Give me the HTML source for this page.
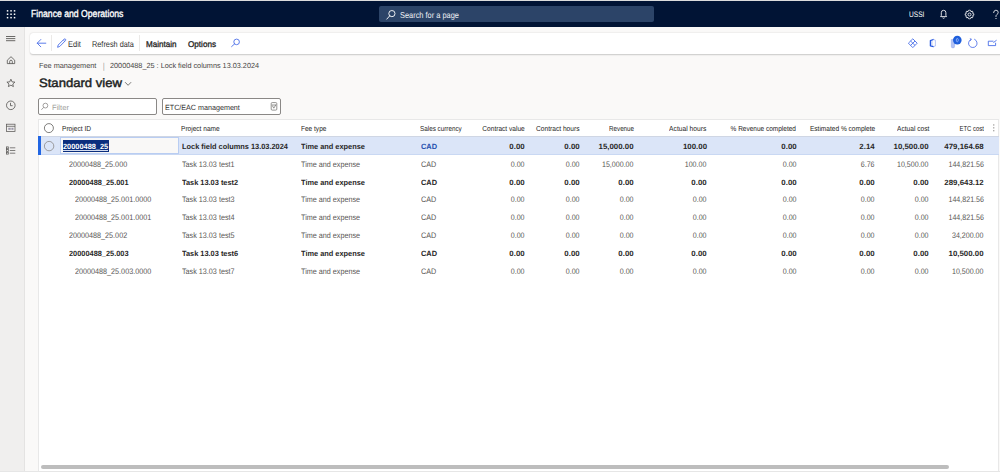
<!DOCTYPE html>
<html><head><meta charset="utf-8">
<style>
*{box-sizing:border-box;margin:0;padding:0}
html,body{width:1000px;height:472px;overflow:hidden;background:#faf9f8;font-family:"Liberation Sans",sans-serif;color:#323130}
.a{position:absolute}
.t{position:absolute;white-space:nowrap;line-height:1;text-rendering:geometricPrecision}
svg{position:absolute;overflow:visible}
</style></head>
<body>
<div class="a" style="left:0;top:0;width:1000px;height:1px;background:#dcdcdc"></div>
<div class="a" style="left:0;top:1px;width:1000px;height:25.5px;background:#011435"></div>
<div class="a" style="left:378.5px;top:6px;width:275.5px;height:16px;background:#2c4468;border-radius:2px"></div>
<div class="a" style="left:0;top:26.5px;width:25px;height:445.5px;background:#f0efee;border-right:1px solid #e4e3e2"></div>
<div class="a" style="left:30px;top:33px;width:975px;height:20.7px;background:#fff;border-radius:3px;box-shadow:0 0.6px 1.6px rgba(0,0,0,0.2)"></div>
<div class="a" style="left:51px;top:35px;width:0.9px;height:16px;background:#ebe9e7"></div>
<div class="a" style="left:139px;top:35px;width:0.9px;height:16px;background:#ebe9e7"></div>
<div class="a" style="left:38px;top:98.2px;width:119px;height:17px;background:#fff;border:1px solid #8a8886;border-radius:2px"></div>
<div class="a" style="left:162px;top:98.2px;width:119px;height:17px;background:#fff;border:1px solid #8a8886;border-radius:2px"></div>
<div class="a" style="left:38px;top:119px;width:961px;height:352px;background:#fff;border:1px solid #e8e8e8;border-bottom:none"></div>
<div class="a" style="left:0;top:471px;width:1000px;height:1px;background:#e6e6e6"></div>
<div class="a" style="left:39px;top:136px;width:959.5px;height:18.6px;background:#dbe5f8;border-top:1px solid #cfd6e4;border-bottom:0.6px solid #c9d8f3"></div>
<div class="a" style="left:38px;top:136.3px;width:2.6px;height:18.4px;background:#2266e3"></div>
<div class="a" style="left:60px;top:136.8px;width:118.8px;height:17.2px;background:#f9f8f7;border:1px solid #b9cdf2"></div>
<div class="a" style="left:62.8px;top:140px;width:46.2px;height:11.8px;background:#0b2e7e"></div>
<div class="a" style="left:63.4px;top:149.6px;width:45px;height:0.9px;background:#d5ddef"></div>
<div class="a" style="left:40.5px;top:465px;width:908.5px;height:3.8px;background:#bdbdbd;border-radius:2px"></div>
<svg width="1000" height="472" viewBox="0 0 1000 472" style="left:0;top:0" fill="none">
 <!-- waffle -->
 <g fill="#fff">
  <rect x="6.8" y="10.1" width="1.5" height="1.5"/><rect x="10.3" y="10.1" width="1.5" height="1.5"/><rect x="13.8" y="10.1" width="1.5" height="1.5"/>
  <rect x="6.8" y="13.5" width="1.5" height="1.5"/><rect x="10.3" y="13.5" width="1.5" height="1.5"/><rect x="13.8" y="13.5" width="1.5" height="1.5"/>
  <rect x="6.8" y="16.9" width="1.5" height="1.5"/><rect x="10.3" y="16.9" width="1.5" height="1.5"/><rect x="13.8" y="16.9" width="1.5" height="1.5"/>
 </g>
 <!-- search in top bar -->
 <g stroke="#ffffff" stroke-width="0.9">
  <circle cx="391.9" cy="13.6" r="3.1"/>
  <path d="M389.7 15.9 L386.8 19.1" stroke-linecap="round"/>
 </g>
 <!-- bell -->
 <g stroke="#ffffff" stroke-width="0.85">
  <path d="M940.6 16.6 L941.3 15.5 L941.3 12.6 Q941.3 10.3 943.6 10.3 Q945.9 10.3 945.9 12.6 L945.9 15.5 L946.6 16.6 Z"/>
  <path d="M942.6 17.8 Q943.6 18.8 944.6 17.8"/>
 </g>
 <!-- gear -->
 <g stroke="#ffffff" stroke-width="0.85">
  <path d="M969.5 10.2 L970.6 10.4 L971.0 11.7 L972.3 11.2 L973.1 12.0 L972.6 13.3 L973.8 13.8 L973.8 15.2 L972.6 15.7 L973.1 17.0 L972.3 17.8 L971.0 17.3 L970.6 18.6 L969.5 18.8 L968.4 18.6 L968.0 17.3 L966.7 17.8 L965.9 17.0 L966.4 15.7 L965.2 15.2 L965.2 13.8 L966.4 13.3 L965.9 12.0 L966.7 11.2 L968.0 11.7 L968.4 10.4 Z"/>
  <circle cx="969.5" cy="14.5" r="1.5"/>
 </g>
 <!-- question -->
 <g stroke="#ffffff" stroke-width="0.8" stroke-linecap="round">
  <path d="M993.6 12.6 Q993.8 10.2 995.9 10.2 Q998.2 10.2 998.2 12.4 Q998.2 13.8 996.9 14.5 Q996 15 996 16.2 L996 16.6"/>
 </g>
 <circle cx="996" cy="18.5" r="0.6" fill="#fff"/>
 <!-- hamburger -->
 <g stroke="#484644" stroke-width="0.8">
  <path d="M6 36.5 H15.3 M6 38.6 H15.3 M6 40.7 H15.3"/>
 </g>
 <!-- home -->
 <g stroke="#4a4846" stroke-width="0.75" stroke-linejoin="round">
  <path d="M7.3 60.2 L11 56.7 L14.7 60.2 L14.7 63.6 L7.3 63.6 Z"/>
  <path d="M9.7 63.6 L9.7 61.4 Q9.7 60.2 11 60.2 Q12.3 60.2 12.3 61.4 L12.3 63.6"/>
 </g>
 <!-- star -->
 <g stroke="#4a4846" stroke-width="0.75" stroke-linejoin="round">
  <path d="M10.9 79.2 L12.1 81.9 L14.9 82.1 L12.8 84.0 L13.4 86.6 L10.9 85.2 L8.4 86.6 L9.0 84.0 L6.9 82.1 L9.7 81.9 Z"/>
 </g>
 <!-- clock -->
 <g stroke="#4a4846" stroke-width="0.75">
  <circle cx="10.8" cy="105.3" r="4.3"/>
  <path d="M10.5 102.8 V105.7 H12.6"/>
 </g>
 <!-- workspace -->
 <g stroke="#5a5856" stroke-width="0.75">
  <rect x="6.5" y="124.2" width="8.5" height="7.2"/>
  <path d="M6.5 126.3 H15"/>
  <rect x="8.3" y="127.8" width="2.4" height="2" fill="#9b97a8" stroke="none"/>
  <rect x="11.4" y="127.8" width="2.1" height="2" fill="#9b97a8" stroke="none"/>
 </g>
 <!-- list -->
 <g stroke="#5a5856" stroke-width="0.75">
  <rect x="6.5" y="146.9" width="1.8" height="1.8"/>
  <rect x="6.5" y="149.6" width="1.8" height="1.8"/>
  <rect x="6.5" y="152.3" width="1.8" height="1.8"/>
  <path d="M9.8 147.8 H15.3 M9.8 150.5 H15.3 M9.8 153.2 H15.3"/>
 </g>
 <!-- back arrow -->
 <g stroke="#4b6ee8" stroke-width="0.9" stroke-linecap="round" stroke-linejoin="round">
  <path d="M45.8 43.2 H37.3 M40.8 39.5 L37.2 43.2 L40.8 46.8"/>
 </g>
 <!-- pencil -->
 <g stroke="#4b6ee8" stroke-width="0.9" stroke-linejoin="round">
  <path d="M57.6 47.3 L58.2 45.0 L64.0 39.2 Q64.9 38.6 65.5 39.2 Q66.1 39.9 65.5 40.6 L59.8 46.4 Z"/>
  <path d="M63.3 40.0 L64.8 41.4"/>
 </g>
 <!-- action search -->
 <g stroke="#4b6ee8" stroke-width="0.9">
  <circle cx="236.6" cy="41.9" r="2.8"/>
  <path d="M234.6 43.9 L231.6 46.6" stroke-linecap="round"/>
 </g>
 <!-- diamond -->
 <g stroke="#3d66e6" stroke-width="0.85" stroke-linejoin="round">
  <path d="M912.8 38.8 L917.2 43.2 L912.8 47.6 L908.4 43.2 Z"/>
  <path d="M910.6 41.0 L915.0 45.4 M915.0 41.0 L910.6 45.4"/>
 </g>
 <!-- office -->
 <g stroke-linejoin="round" stroke-linecap="round">
  <path d="M933.4 39.5 L930.4 40.7 L930.4 45.8 L933.4 46.6" stroke="#2458e0" stroke-width="1.3"/>
  <path d="M933.4 39.5 L935.4 40.2 L935.4 46.0 L933.4 46.6" stroke="#9aaef0" stroke-width="0.7"/>
  <path d="M931.9 41 V45.4" stroke="#7f98ea" stroke-width="0.6"/>
 </g>
 <!-- attach -->
 <path d="M951.3 39.6 H954.6 V46.4 Q954.6 47.9 952.95 47.9 Q951.3 47.9 951.3 46.4 Z" fill="#b3c2f2" stroke="#8ea5ee" stroke-width="0.5"/>
 <circle cx="957.3" cy="40.1" r="4.3" fill="#1f5fdc"/>
 <path d="M957.3 38.4 Q956.3 38.4 956.3 40.1 Q956.3 41.8 957.3 41.8 Q958.3 41.8 958.3 40.1 Q958.3 38.4 957.3 38.4 Z" stroke="#cfdcff" stroke-width="0.55"/>
 <!-- refresh -->
 <g stroke="#4b6ee8" stroke-width="0.85" stroke-linecap="round">
  <path d="M974.6 39.3 A4.3 4.3 0 1 1 971.0 39.3"/>
  <path d="M970.4 38.6 L971.3 39.6 L970.2 40.6" stroke-width="0.9"/>
 </g>
 <!-- open in new -->
 <g stroke="#3d66e6" stroke-width="0.85">
  <path d="M993.5 41.2 H988.3 V45.6 H995.6 V42.8"/>
  <path d="M993.4 42.6 L996.6 40.2"/>
 </g>
 <!-- chevron -->
 <path d="M125.1 82.2 L128.1 85.3 L131.1 82.2" stroke="#605e5c" stroke-width="0.85"/>
 <!-- filter search -->
 <g stroke="#8a8886" stroke-width="0.8">
  <circle cx="45.4" cy="105.6" r="2.4"/>
  <path d="M43.7 107.3 L41.4 109.8"/>
 </g>
 <!-- ETC icon -->
 <g stroke="#7a7876" stroke-width="0.8">
  <rect x="271.2" y="102.6" width="5.6" height="7.5" rx="1"/>
  <path d="M272.3 105.6 L273.8 108.2 L276.0 104.6 M271.8 105 H276"/>
 </g>
 <!-- header radio -->
 <circle cx="48.9" cy="128.1" r="4.5" stroke="#605e5c" stroke-width="0.8"/>
 <!-- selected row radio -->
 <circle cx="49.1" cy="146.1" r="4.7" stroke="#8a8886" stroke-width="0.8"/>
 <!-- header more -->
 <g fill="#9a9896">
  <rect x="993" y="124.4" width="1.4" height="1.1"/><rect x="993" y="127.3" width="1.4" height="1.1"/><rect x="993" y="130.2" width="1.4" height="1.1"/>
 </g>
</svg>

<div class="t" style="left:30.59px;top:10.00px;font-size:10.14px;color:#ffffff;font-weight:normal;-webkit-text-stroke:0.35px #ffffff;transform:scaleX(0.855);transform-origin:left;">Finance and Operations</div>
<div class="t" style="left:399.66px;top:11.00px;font-size:8.55px;color:#eef0f4;font-weight:normal;transform:scaleX(0.867);transform-origin:left;">Search for a page</div>
<div class="t" style="left:908.68px;top:11.00px;font-size:7.97px;color:#ffffff;font-weight:normal;transform:scaleX(0.828);transform-origin:left;">USSI</div>
<div class="t" style="left:67.66px;top:40.00px;font-size:8.41px;color:#323130;font-weight:normal;transform:scaleX(0.894);transform-origin:left;">Edit</div>
<div class="t" style="left:92.16px;top:40.00px;font-size:8.41px;color:#323130;font-weight:normal;transform:scaleX(0.871);transform-origin:left;">Refresh data</div>
<div class="t" style="left:146.06px;top:40.00px;font-size:8.41px;color:#252423;font-weight:normal;-webkit-text-stroke:0.3px #252423;transform:scaleX(0.959);transform-origin:left;">Maintain</div>
<div class="t" style="left:187.66px;top:40.00px;font-size:8.41px;color:#252423;font-weight:normal;-webkit-text-stroke:0.3px #252423;transform:scaleX(0.966);transform-origin:left;">Options</div>
<div class="t" style="left:38.70px;top:62.00px;font-size:7.39px;color:#484644;font-weight:normal;transform:scaleX(0.992);transform-origin:left;">Fee management</div>
<div class="t" style="left:103.15px;top:62.00px;font-size:8.70px;color:#8a8886;font-weight:normal;transform:scaleX(0.690);transform-origin:left;">|</div>
<div class="t" style="left:109.70px;top:62.00px;font-size:7.39px;color:#484644;font-weight:normal;transform:scaleX(0.988);transform-origin:left;">20000488_25 : Lock field columns 13.03.2024</div>
<div class="t" style="left:39.01px;top:77.00px;font-size:12.17px;color:#201f1e;font-weight:normal;-webkit-text-stroke:0.45px #201f1e;transform:scaleX(1.077);transform-origin:left;">Standard view</div>
<div class="t" style="left:51.70px;top:104.00px;font-size:7.54px;color:#a19f9d;font-weight:normal;transform:scaleX(1.012);transform-origin:left;">Filter</div>
<div class="t" style="left:165.20px;top:104.00px;font-size:7.54px;color:#323130;font-weight:normal;transform:scaleX(0.951);transform-origin:left;">ETC/EAC management</div>
<div class="t" style="left:62.01px;top:125.00px;font-size:7.25px;color:#252423;font-weight:normal;transform:scaleX(0.911);transform-origin:left;">Project ID</div>
<div class="t" style="left:181.41px;top:125.00px;font-size:7.25px;color:#252423;font-weight:normal;transform:scaleX(0.906);transform-origin:left;">Project name</div>
<div class="t" style="left:300.71px;top:125.00px;font-size:7.25px;color:#252423;font-weight:normal;transform:scaleX(0.900);transform-origin:left;">Fee type</div>
<div class="t" style="left:420.31px;top:125.00px;font-size:7.25px;color:#252423;font-weight:normal;transform:scaleX(0.871);transform-origin:left;">Sales currency</div>
<div class="t" style="right:475.31px;top:125.00px;font-size:7.25px;color:#252423;font-weight:normal;transform:scaleX(0.907);transform-origin:right;">Contract value</div>
<div class="t" style="right:420.51px;top:125.00px;font-size:7.25px;color:#252423;font-weight:normal;transform:scaleX(0.917);transform-origin:right;">Contract hours</div>
<div class="t" style="right:366.11px;top:125.00px;font-size:7.25px;color:#252423;font-weight:normal;transform:scaleX(0.861);transform-origin:right;">Revenue</div>
<div class="t" style="right:293.31px;top:125.00px;font-size:7.25px;color:#252423;font-weight:normal;transform:scaleX(0.923);transform-origin:right;">Actual hours</div>
<div class="t" style="right:203.71px;top:125.00px;font-size:7.25px;color:#252423;font-weight:normal;transform:scaleX(0.896);transform-origin:right;">% Revenue completed</div>
<div class="t" style="right:125.31px;top:125.00px;font-size:7.25px;color:#252423;font-weight:normal;transform:scaleX(0.904);transform-origin:right;">Estimated % complete</div>
<div class="t" style="right:70.71px;top:125.00px;font-size:7.25px;color:#252423;font-weight:normal;transform:scaleX(0.914);transform-origin:right;">Actual cost</div>
<div class="t" style="right:16.31px;top:125.00px;font-size:7.25px;color:#252423;font-weight:normal;transform:scaleX(0.817);transform-origin:right;">ETC cost</div>
<div class="t" style="left:63.20px;top:143.00px;font-size:7.54px;color:#ffffff;font-weight:bold;transform:scaleX(0.981);transform-origin:left;">20000488_25</div>
<div class="t" style="left:182.20px;top:143.00px;font-size:7.54px;color:#292827;font-weight:bold;transform:scaleX(0.981);transform-origin:left;">Lock field columns 13.03.2024</div>
<div class="t" style="left:301.20px;top:143.00px;font-size:7.54px;color:#292827;font-weight:bold;transform:scaleX(0.981);transform-origin:left;">Time and expense</div>
<div class="t" style="left:420.70px;top:143.00px;font-size:7.54px;color:#1f4fae;font-weight:bold;transform:scaleX(0.981);transform-origin:left;">CAD</div>
<div class="t" style="right:475.30px;top:143.00px;font-size:7.54px;color:#292827;font-weight:bold;transform:scaleX(1.044);transform-origin:right;">0.00</div>
<div class="t" style="right:420.50px;top:143.00px;font-size:7.54px;color:#292827;font-weight:bold;transform:scaleX(1.044);transform-origin:right;">0.00</div>
<div class="t" style="right:366.10px;top:143.00px;font-size:7.54px;color:#292827;font-weight:bold;transform:scaleX(1.044);transform-origin:right;">15,000.00</div>
<div class="t" style="right:293.30px;top:143.00px;font-size:7.54px;color:#292827;font-weight:bold;transform:scaleX(1.044);transform-origin:right;">100.00</div>
<div class="t" style="right:203.70px;top:143.00px;font-size:7.54px;color:#292827;font-weight:bold;transform:scaleX(1.044);transform-origin:right;">0.00</div>
<div class="t" style="right:125.30px;top:143.00px;font-size:7.54px;color:#292827;font-weight:bold;transform:scaleX(1.044);transform-origin:right;">2.14</div>
<div class="t" style="right:71.10px;top:143.00px;font-size:7.54px;color:#292827;font-weight:bold;transform:scaleX(1.044);transform-origin:right;">10,500.00</div>
<div class="t" style="right:16.30px;top:143.00px;font-size:7.54px;color:#292827;font-weight:bold;transform:scaleX(1.044);transform-origin:right;">479,164.68</div>
<div class="t" style="left:68.68px;top:161.00px;font-size:7.97px;color:#585654;font-weight:normal;transform:scaleX(0.905);transform-origin:left;">20000488_25.000</div>
<div class="t" style="left:182.18px;top:161.00px;font-size:7.97px;color:#585654;font-weight:normal;transform:scaleX(0.905);transform-origin:left;">Task 13.03 test1</div>
<div class="t" style="left:301.18px;top:161.00px;font-size:7.97px;color:#585654;font-weight:normal;transform:scaleX(0.905);transform-origin:left;">Time and expense</div>
<div class="t" style="left:420.68px;top:161.00px;font-size:7.97px;color:#585654;font-weight:normal;transform:scaleX(0.905);transform-origin:left;">CAD</div>
<div class="t" style="right:475.28px;top:161.00px;font-size:7.97px;color:#585654;font-weight:normal;transform:scaleX(0.887);transform-origin:right;">0.00</div>
<div class="t" style="right:420.48px;top:161.00px;font-size:7.97px;color:#585654;font-weight:normal;transform:scaleX(0.887);transform-origin:right;">0.00</div>
<div class="t" style="right:366.08px;top:161.00px;font-size:7.97px;color:#585654;font-weight:normal;transform:scaleX(0.887);transform-origin:right;">15,000.00</div>
<div class="t" style="right:293.28px;top:161.00px;font-size:7.97px;color:#585654;font-weight:normal;transform:scaleX(0.887);transform-origin:right;">100.00</div>
<div class="t" style="right:203.68px;top:161.00px;font-size:7.97px;color:#585654;font-weight:normal;transform:scaleX(0.887);transform-origin:right;">0.00</div>
<div class="t" style="right:125.28px;top:161.00px;font-size:7.97px;color:#585654;font-weight:normal;transform:scaleX(0.887);transform-origin:right;">6.76</div>
<div class="t" style="right:71.08px;top:161.00px;font-size:7.97px;color:#585654;font-weight:normal;transform:scaleX(0.887);transform-origin:right;">10,500.00</div>
<div class="t" style="right:16.28px;top:161.00px;font-size:7.97px;color:#585654;font-weight:normal;transform:scaleX(0.887);transform-origin:right;">144,821.56</div>
<div class="t" style="left:68.70px;top:179.00px;font-size:7.54px;color:#292827;font-weight:bold;transform:scaleX(0.981);transform-origin:left;">20000488_25.001</div>
<div class="t" style="left:182.20px;top:179.00px;font-size:7.54px;color:#292827;font-weight:bold;transform:scaleX(0.981);transform-origin:left;">Task 13.03 test2</div>
<div class="t" style="left:301.20px;top:179.00px;font-size:7.54px;color:#292827;font-weight:bold;transform:scaleX(0.981);transform-origin:left;">Time and expense</div>
<div class="t" style="left:420.70px;top:179.00px;font-size:7.54px;color:#292827;font-weight:bold;transform:scaleX(0.981);transform-origin:left;">CAD</div>
<div class="t" style="right:475.30px;top:179.00px;font-size:7.54px;color:#292827;font-weight:bold;transform:scaleX(1.044);transform-origin:right;">0.00</div>
<div class="t" style="right:420.50px;top:179.00px;font-size:7.54px;color:#292827;font-weight:bold;transform:scaleX(1.044);transform-origin:right;">0.00</div>
<div class="t" style="right:366.10px;top:179.00px;font-size:7.54px;color:#292827;font-weight:bold;transform:scaleX(1.044);transform-origin:right;">0.00</div>
<div class="t" style="right:293.30px;top:179.00px;font-size:7.54px;color:#292827;font-weight:bold;transform:scaleX(1.044);transform-origin:right;">0.00</div>
<div class="t" style="right:203.70px;top:179.00px;font-size:7.54px;color:#292827;font-weight:bold;transform:scaleX(1.044);transform-origin:right;">0.00</div>
<div class="t" style="right:125.30px;top:179.00px;font-size:7.54px;color:#292827;font-weight:bold;transform:scaleX(1.044);transform-origin:right;">0.00</div>
<div class="t" style="right:71.10px;top:179.00px;font-size:7.54px;color:#292827;font-weight:bold;transform:scaleX(1.044);transform-origin:right;">0.00</div>
<div class="t" style="right:16.30px;top:179.00px;font-size:7.54px;color:#292827;font-weight:bold;transform:scaleX(1.044);transform-origin:right;">289,643.12</div>
<div class="t" style="left:74.68px;top:196.00px;font-size:7.97px;color:#585654;font-weight:normal;transform:scaleX(0.905);transform-origin:left;">20000488_25.001.0000</div>
<div class="t" style="left:182.18px;top:196.00px;font-size:7.97px;color:#585654;font-weight:normal;transform:scaleX(0.905);transform-origin:left;">Task 13.03 test3</div>
<div class="t" style="left:301.18px;top:196.00px;font-size:7.97px;color:#585654;font-weight:normal;transform:scaleX(0.905);transform-origin:left;">Time and expense</div>
<div class="t" style="left:420.68px;top:196.00px;font-size:7.97px;color:#585654;font-weight:normal;transform:scaleX(0.905);transform-origin:left;">CAD</div>
<div class="t" style="right:475.28px;top:196.00px;font-size:7.97px;color:#585654;font-weight:normal;transform:scaleX(0.887);transform-origin:right;">0.00</div>
<div class="t" style="right:420.48px;top:196.00px;font-size:7.97px;color:#585654;font-weight:normal;transform:scaleX(0.887);transform-origin:right;">0.00</div>
<div class="t" style="right:366.08px;top:196.00px;font-size:7.97px;color:#585654;font-weight:normal;transform:scaleX(0.887);transform-origin:right;">0.00</div>
<div class="t" style="right:293.28px;top:196.00px;font-size:7.97px;color:#585654;font-weight:normal;transform:scaleX(0.887);transform-origin:right;">0.00</div>
<div class="t" style="right:203.68px;top:196.00px;font-size:7.97px;color:#585654;font-weight:normal;transform:scaleX(0.887);transform-origin:right;">0.00</div>
<div class="t" style="right:125.28px;top:196.00px;font-size:7.97px;color:#585654;font-weight:normal;transform:scaleX(0.887);transform-origin:right;">0.00</div>
<div class="t" style="right:71.08px;top:196.00px;font-size:7.97px;color:#585654;font-weight:normal;transform:scaleX(0.887);transform-origin:right;">0.00</div>
<div class="t" style="right:16.28px;top:196.00px;font-size:7.97px;color:#585654;font-weight:normal;transform:scaleX(0.887);transform-origin:right;">144,821.56</div>
<div class="t" style="left:74.68px;top:214.00px;font-size:7.97px;color:#585654;font-weight:normal;transform:scaleX(0.905);transform-origin:left;">20000488_25.001.0001</div>
<div class="t" style="left:182.18px;top:214.00px;font-size:7.97px;color:#585654;font-weight:normal;transform:scaleX(0.905);transform-origin:left;">Task 13.03 test4</div>
<div class="t" style="left:301.18px;top:214.00px;font-size:7.97px;color:#585654;font-weight:normal;transform:scaleX(0.905);transform-origin:left;">Time and expense</div>
<div class="t" style="left:420.68px;top:214.00px;font-size:7.97px;color:#585654;font-weight:normal;transform:scaleX(0.905);transform-origin:left;">CAD</div>
<div class="t" style="right:475.28px;top:214.00px;font-size:7.97px;color:#585654;font-weight:normal;transform:scaleX(0.887);transform-origin:right;">0.00</div>
<div class="t" style="right:420.48px;top:214.00px;font-size:7.97px;color:#585654;font-weight:normal;transform:scaleX(0.887);transform-origin:right;">0.00</div>
<div class="t" style="right:366.08px;top:214.00px;font-size:7.97px;color:#585654;font-weight:normal;transform:scaleX(0.887);transform-origin:right;">0.00</div>
<div class="t" style="right:293.28px;top:214.00px;font-size:7.97px;color:#585654;font-weight:normal;transform:scaleX(0.887);transform-origin:right;">0.00</div>
<div class="t" style="right:203.68px;top:214.00px;font-size:7.97px;color:#585654;font-weight:normal;transform:scaleX(0.887);transform-origin:right;">0.00</div>
<div class="t" style="right:125.28px;top:214.00px;font-size:7.97px;color:#585654;font-weight:normal;transform:scaleX(0.887);transform-origin:right;">0.00</div>
<div class="t" style="right:71.08px;top:214.00px;font-size:7.97px;color:#585654;font-weight:normal;transform:scaleX(0.887);transform-origin:right;">0.00</div>
<div class="t" style="right:16.28px;top:214.00px;font-size:7.97px;color:#585654;font-weight:normal;transform:scaleX(0.887);transform-origin:right;">144,821.56</div>
<div class="t" style="left:68.68px;top:232.00px;font-size:7.97px;color:#585654;font-weight:normal;transform:scaleX(0.905);transform-origin:left;">20000488_25.002</div>
<div class="t" style="left:182.18px;top:232.00px;font-size:7.97px;color:#585654;font-weight:normal;transform:scaleX(0.905);transform-origin:left;">Task 13.03 test5</div>
<div class="t" style="left:301.18px;top:232.00px;font-size:7.97px;color:#585654;font-weight:normal;transform:scaleX(0.905);transform-origin:left;">Time and expense</div>
<div class="t" style="left:420.68px;top:232.00px;font-size:7.97px;color:#585654;font-weight:normal;transform:scaleX(0.905);transform-origin:left;">CAD</div>
<div class="t" style="right:475.28px;top:232.00px;font-size:7.97px;color:#585654;font-weight:normal;transform:scaleX(0.887);transform-origin:right;">0.00</div>
<div class="t" style="right:420.48px;top:232.00px;font-size:7.97px;color:#585654;font-weight:normal;transform:scaleX(0.887);transform-origin:right;">0.00</div>
<div class="t" style="right:366.08px;top:232.00px;font-size:7.97px;color:#585654;font-weight:normal;transform:scaleX(0.887);transform-origin:right;">0.00</div>
<div class="t" style="right:293.28px;top:232.00px;font-size:7.97px;color:#585654;font-weight:normal;transform:scaleX(0.887);transform-origin:right;">0.00</div>
<div class="t" style="right:203.68px;top:232.00px;font-size:7.97px;color:#585654;font-weight:normal;transform:scaleX(0.887);transform-origin:right;">0.00</div>
<div class="t" style="right:125.28px;top:232.00px;font-size:7.97px;color:#585654;font-weight:normal;transform:scaleX(0.887);transform-origin:right;">0.00</div>
<div class="t" style="right:71.08px;top:232.00px;font-size:7.97px;color:#585654;font-weight:normal;transform:scaleX(0.887);transform-origin:right;">0.00</div>
<div class="t" style="right:16.28px;top:232.00px;font-size:7.97px;color:#585654;font-weight:normal;transform:scaleX(0.887);transform-origin:right;">34,200.00</div>
<div class="t" style="left:68.70px;top:250.00px;font-size:7.54px;color:#292827;font-weight:bold;transform:scaleX(0.981);transform-origin:left;">20000488_25.003</div>
<div class="t" style="left:182.20px;top:250.00px;font-size:7.54px;color:#292827;font-weight:bold;transform:scaleX(0.981);transform-origin:left;">Task 13.03 test6</div>
<div class="t" style="left:301.20px;top:250.00px;font-size:7.54px;color:#292827;font-weight:bold;transform:scaleX(0.981);transform-origin:left;">Time and expense</div>
<div class="t" style="left:420.70px;top:250.00px;font-size:7.54px;color:#292827;font-weight:bold;transform:scaleX(0.981);transform-origin:left;">CAD</div>
<div class="t" style="right:475.30px;top:250.00px;font-size:7.54px;color:#292827;font-weight:bold;transform:scaleX(1.044);transform-origin:right;">0.00</div>
<div class="t" style="right:420.50px;top:250.00px;font-size:7.54px;color:#292827;font-weight:bold;transform:scaleX(1.044);transform-origin:right;">0.00</div>
<div class="t" style="right:366.10px;top:250.00px;font-size:7.54px;color:#292827;font-weight:bold;transform:scaleX(1.044);transform-origin:right;">0.00</div>
<div class="t" style="right:293.30px;top:250.00px;font-size:7.54px;color:#292827;font-weight:bold;transform:scaleX(1.044);transform-origin:right;">0.00</div>
<div class="t" style="right:203.70px;top:250.00px;font-size:7.54px;color:#292827;font-weight:bold;transform:scaleX(1.044);transform-origin:right;">0.00</div>
<div class="t" style="right:125.30px;top:250.00px;font-size:7.54px;color:#292827;font-weight:bold;transform:scaleX(1.044);transform-origin:right;">0.00</div>
<div class="t" style="right:71.10px;top:250.00px;font-size:7.54px;color:#292827;font-weight:bold;transform:scaleX(1.044);transform-origin:right;">0.00</div>
<div class="t" style="right:16.30px;top:250.00px;font-size:7.54px;color:#292827;font-weight:bold;transform:scaleX(1.044);transform-origin:right;">10,500.00</div>
<div class="t" style="left:74.68px;top:268.00px;font-size:7.97px;color:#585654;font-weight:normal;transform:scaleX(0.905);transform-origin:left;">20000488_25.003.0000</div>
<div class="t" style="left:182.18px;top:268.00px;font-size:7.97px;color:#585654;font-weight:normal;transform:scaleX(0.905);transform-origin:left;">Task 13.03 test7</div>
<div class="t" style="left:301.18px;top:268.00px;font-size:7.97px;color:#585654;font-weight:normal;transform:scaleX(0.905);transform-origin:left;">Time and expense</div>
<div class="t" style="left:420.68px;top:268.00px;font-size:7.97px;color:#585654;font-weight:normal;transform:scaleX(0.905);transform-origin:left;">CAD</div>
<div class="t" style="right:475.28px;top:268.00px;font-size:7.97px;color:#585654;font-weight:normal;transform:scaleX(0.887);transform-origin:right;">0.00</div>
<div class="t" style="right:420.48px;top:268.00px;font-size:7.97px;color:#585654;font-weight:normal;transform:scaleX(0.887);transform-origin:right;">0.00</div>
<div class="t" style="right:366.08px;top:268.00px;font-size:7.97px;color:#585654;font-weight:normal;transform:scaleX(0.887);transform-origin:right;">0.00</div>
<div class="t" style="right:293.28px;top:268.00px;font-size:7.97px;color:#585654;font-weight:normal;transform:scaleX(0.887);transform-origin:right;">0.00</div>
<div class="t" style="right:203.68px;top:268.00px;font-size:7.97px;color:#585654;font-weight:normal;transform:scaleX(0.887);transform-origin:right;">0.00</div>
<div class="t" style="right:125.28px;top:268.00px;font-size:7.97px;color:#585654;font-weight:normal;transform:scaleX(0.887);transform-origin:right;">0.00</div>
<div class="t" style="right:71.08px;top:268.00px;font-size:7.97px;color:#585654;font-weight:normal;transform:scaleX(0.887);transform-origin:right;">0.00</div>
<div class="t" style="right:16.28px;top:268.00px;font-size:7.97px;color:#585654;font-weight:normal;transform:scaleX(0.887);transform-origin:right;">10,500.00</div>
</body></html>
